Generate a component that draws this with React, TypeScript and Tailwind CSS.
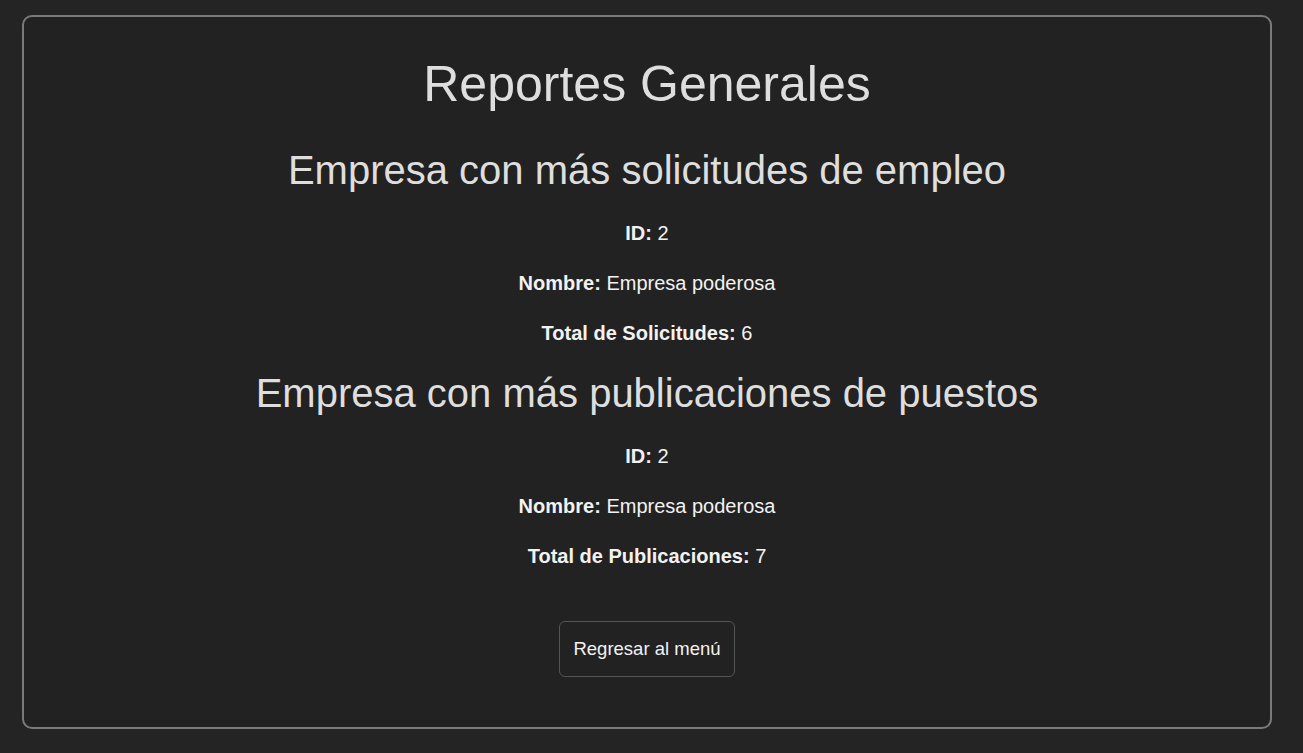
import React from "react";

function Row({ label, value }: { label: string; value: string }) {
  return (
    <p className="text-[20px] leading-[24px] text-[#f2f2f2] text-center">
      <span className="font-bold">{label}</span> {value}
    </p>
  );
}

export default function App() {
  return (
    <div
      className="min-h-[753px] w-full bg-[#242424] px-[22px] pt-[15px] pb-[26px]"
      style={{ fontFamily: '"Liberation Sans", Arial, sans-serif' }}
    >
      <div className="w-[1250px] border-2 border-[#7a7a7a] rounded-[10px] bg-[#222222] flex flex-col items-center pt-[37px] pb-[50px]">
        <h1 className="text-[50px] leading-[60px] text-[#dedede]">Reportes Generales</h1>
        <h2 className="mt-[32px] text-[40px] leading-[48px] text-[#dedede]">
          Empresa con más solicitudes de empleo
        </h2>
        <div className="mt-[27px] flex flex-col items-center gap-[26px]">
          <Row label="ID:" value="2" />
          <Row label="Nombre:" value="Empresa poderosa" />
          <Row label="Total de Solicitudes:" value="6" />
        </div>
        <h2 className="mt-[24px] text-[40px] leading-[48px] text-[#dedede]">
          Empresa con más publicaciones de puestos
        </h2>
        <div className="mt-[27px] flex flex-col items-center gap-[26px]">
          <Row label="ID:" value="2" />
          <Row label="Nombre:" value="Empresa poderosa" />
          <Row label="Total de Publicaciones:" value="7" />
        </div>
        <button className="mt-[53px] h-[56px] w-[176px] rounded-[6px] border border-[#555555] bg-[#222222] text-[18.5px] text-[#f2f2f2]">
          Regresar al menú
        </button>
      </div>
    </div>
  );
}
